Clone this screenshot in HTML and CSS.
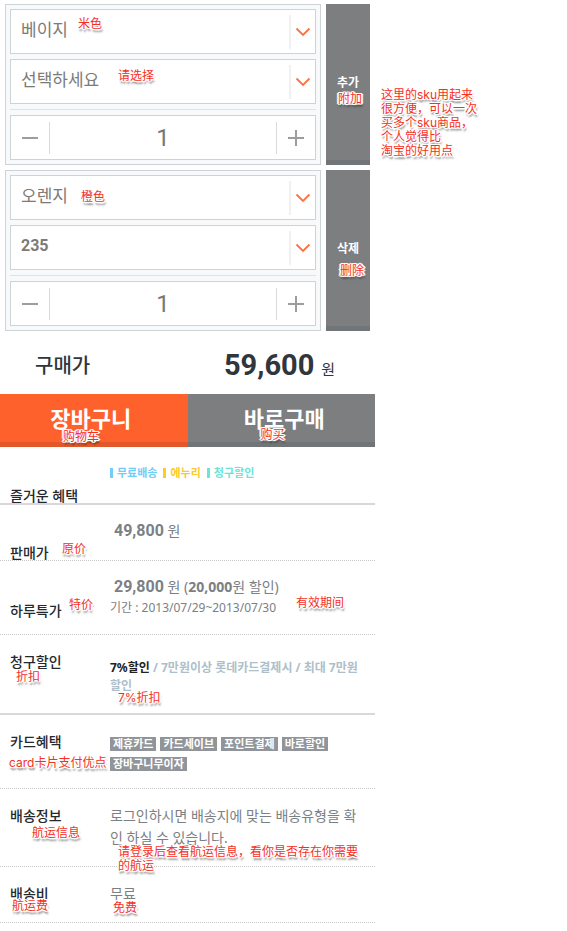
FILE: index.html
```html
<!DOCTYPE html>
<html lang="ko">
<head>
<meta charset="utf-8">
<meta name="viewport" content="width=device-width, initial-scale=1">
<title>구매 옵션</title>
<link rel="stylesheet" href="styles.css">
</head>
<body>
<div class="page">
  <main class="shop">
    <form class="skus">
      <section class="sku">
        <div class="sku-box">
          <div class="pick">
            <select class="pick-input" aria-label="색상"><option>베이지</option></select>
            <svg class="chevron" viewBox="0 0 16 10" aria-hidden="true"><path d="M1.500 1.500 8 8l6.500-6.500"/></svg>
            <span class="note note-beige" lang="zh">米色</span>
          </div>
          <div class="pick">
            <select class="pick-input" aria-label="사이즈"><option>선택하세요</option></select>
            <svg class="chevron" viewBox="0 0 16 10" aria-hidden="true"><path d="M1.500 1.500 8 8l6.500-6.500"/></svg>
            <span class="note note-choose" lang="zh">请选择</span>
          </div>
          <hr class="rule">
          <div class="qty">
            <button class="step" type="button" aria-label="수량 감소"><svg viewBox="0 0 18 18" aria-hidden="true"><path d="M1 9h16"/></svg></button>
            <input class="count" type="text" value="1" aria-label="수량">
            <button class="step" type="button" aria-label="수량 증가"><svg viewBox="0 0 18 18" aria-hidden="true"><path d="M1 9h16M9 1v16"/></svg></button>
          </div>
        </div>
        <button class="side" type="button">추가<span class="note note-add" lang="zh">附加</span></button>
      </section>
      <section class="sku">
        <div class="sku-box">
          <div class="pick">
            <select class="pick-input" aria-label="색상"><option>오렌지</option></select>
            <svg class="chevron" viewBox="0 0 16 10" aria-hidden="true"><path d="M1.500 1.500 8 8l6.500-6.500"/></svg>
            <span class="note note-orange" lang="zh">橙色</span>
          </div>
          <div class="pick">
            <select class="pick-input pick-size" aria-label="사이즈"><option>235</option></select>
            <svg class="chevron" viewBox="0 0 16 10" aria-hidden="true"><path d="M1.500 1.500 8 8l6.500-6.500"/></svg>
          </div>
          <hr class="rule">
          <div class="qty">
            <button class="step" type="button" aria-label="수량 감소"><svg viewBox="0 0 18 18" aria-hidden="true"><path d="M1 9h16"/></svg></button>
            <input class="count" type="text" value="1" aria-label="수량">
            <button class="step" type="button" aria-label="수량 증가"><svg viewBox="0 0 18 18" aria-hidden="true"><path d="M1 9h16M9 1v16"/></svg></button>
          </div>
        </div>
        <button class="side" type="button">삭제<span class="note note-delete" lang="zh">删除</span></button>
      </section>
    </form>

    <div class="total">
      <span class="total-label">구매가</span>
      <span class="total-sum"><strong class="total-num">59,600</strong> 원</span>
    </div>

    <div class="actions">
      <button class="action action-cart" type="button">장바구니<span class="note note-cart" lang="zh">购物车</span></button>
      <button class="action action-buy" type="button">바로구매<span class="note note-buy" lang="zh">购买</span></button>
    </div>

    <dl class="info">
      <div class="row row-benefit solid">
        <dt>즐거운 혜택</dt>
        <dd class="perks">
          <span class="perk perk-ship">무료배송</span>
          <span class="perk perk-sale">에누리</span>
          <span class="perk perk-card">청구할인</span>
        </dd>
      </div>
      <div class="row row-price">
        <dt>판매가</dt>
        <dd class="money"><strong>49,800</strong> 원</dd>
        <dd class="note note-price" lang="zh">原价</dd>
      </div>
      <div class="row row-deal">
        <dt>하루특가</dt>
        <dd>
          <div class="money"><strong>29,800</strong> 원 (<b>20,000</b>원 할인)</div>
          <div class="period">기간 : 2013/07/29~2013/07/30</div>
        </dd>
        <dd class="note note-deal" lang="zh">特价</dd>
        <dd class="note note-period" lang="zh">有效期间</dd>
      </div>
      <div class="row row-discount solid">
        <dt>청구할인</dt>
        <dd class="terms"><em>7%할인</em> / 7만원이상 롯데카드결제시 / 최대 7만원할인</dd>
        <dd class="note note-discount" lang="zh">折扣</dd>
        <dd class="note note-seven" lang="zh">7%折扣</dd>
      </div>
      <div class="row row-cards">
        <dt>카드혜택</dt>
        <dd class="tags">
          <span class="tag">제휴카드</span>
          <span class="tag">카드세이브</span>
          <span class="tag">포인트결제</span>
          <span class="tag">바로할인</span>
          <span class="tag">장바구니무이자</span>
        </dd>
        <dd class="note note-cards" lang="zh">card卡片支付优点</dd>
      </div>
      <div class="row row-delivery">
        <dt>배송정보</dt>
        <dd class="plain">로그인하시면 배송지에 맞는 배송유형을 확인 하실 수 있습니다.</dd>
        <dd class="note note-delivery" lang="zh">航运信息</dd>
        <dd class="note note-login" lang="zh">请登录后查看航运信息，看你是否存在你需要<br>的航运</dd>
      </div>
      <div class="row row-fee">
        <dt>배송비</dt>
        <dd class="plain">무료</dd>
        <dd class="note note-fee" lang="zh">航运费</dd>
        <dd class="note note-free" lang="zh">免费</dd>
      </div>
    </dl>
  </main>
  <aside class="remark" lang="zh">这里的sku用起来<br>很方便，可以一次<br>买多个sku商品，<br>个人觉得比<br>淘宝的好用点</aside>
</div>
</body>
</html>
```
FILE: styles.css
```css
* { box-sizing: border-box; }

body {
  margin: 0;
  background: #fff;
  color: #7b8085;
  font-family: "Noto Sans", "Noto Sans CJK KR", sans-serif;
}

button, input, select { font-family: inherit; }

.page {
  display: grid;
  grid-template-columns: minmax(0, 1fr) 192px;
}

/* Option pickers */
.skus {
  display: flex;
  flex-direction: column;
  gap: 5px;
  padding: 4px 5px 0;
}

.sku { display: flex; gap: 5px; }

.sku-box {
  flex: 1;
  min-width: 0;
  display: flex;
  flex-direction: column;
  gap: 5px;
  padding: 4px;
  border: 1px solid #cdd4d7;
  background: #f7f9fb;
}

.pick {
  position: relative;
  display: flex;
  align-items: center;
}

.pick-input {
  appearance: none;
  width: 100%;
  height: 45px;
  padding: 0 36px 4px 10px;
  border: 1px solid #cdd4d7;
  border-radius: 0;
  background: linear-gradient(#f1f1f1, #f1f1f1) right 24px center / 2px 34px no-repeat #fff;
  color: #7d7b77;
  font-size: 17px;
}

.pick-size {
  font-family: Roboto, sans-serif;
  font-size: 16px;
  font-weight: 700;
}

.chevron {
  position: absolute;
  right: 5px;
  width: 16px;
  height: 10px;
  fill: none;
  stroke: #ff7043;
  stroke-width: 1.8;
  pointer-events: none;
}

.rule {
  width: 100%;
  height: 1px;
  margin: 0;
  border: 0;
  background: #dfe3e6;
}

.qty {
  display: flex;
  align-items: center;
  height: 45px;
  border: 1px solid #cdd4d7;
  background: #fff;
}

.step {
  display: flex;
  align-items: center;
  justify-content: center;
  width: 39px;
  height: 32px;
  padding: 0;
  border: 0 solid #d8dadb;
  background: none;
}

.step:first-child { border-right-width: 1px; }
.step:last-child { border-left-width: 1px; }

.step svg {
  width: 18px;
  height: 18px;
  fill: none;
  stroke: #9c9d9e;
  stroke-width: 2;
}

.count {
  flex: 1;
  min-width: 0;
  height: 32px;
  padding: 0;
  border: 0;
  background: none;
  color: #777;
  font-family: Roboto, sans-serif;
  font-size: 24px;
  text-align: center;
}

.side, .action {
  position: relative;
  padding: 0;
  border: 0;
  border-bottom: 5px solid #717578;
  background: #7d7e80;
  color: #fff;
  font-weight: 700;
}

.side { width: 44px; font-size: 12px; }

/* Total */
.total {
  display: flex;
  align-items: center;
  justify-content: space-between;
  height: 63px;
  padding: 4px 40px 0 35px;
  color: #30363c;
}

.total-label { font-size: 20px; font-weight: 500; }
.total-sum { font-size: 15px; }

.total-num {
  margin-right: 3px;
  font-family: Roboto, sans-serif;
  font-size: 29px;
  line-height: 40px;
}

.actions { display: grid; grid-template-columns: 1fr 1fr; }
.action { height: 53px; font-size: 22px; line-height: 48px; }
.action-cart { padding-right: 6px; border-color: #e2582b; background: #ff612d; }
.action-buy { padding-left: 6px; }

/* Product information */
.info { margin: 0; }

.row {
  position: relative;
  display: grid;
  grid-template-columns: 100px minmax(0, 1fr);
  align-items: start;
  padding: 16px 10px 0;
  border-bottom: 1px dotted #c8c8c8;
}

.solid { border-bottom: 2px solid #d8d8d8; }

dt {
  padding-top: 4px;
  color: #24292e;
  font-size: 14px;
  font-weight: 500;
  line-height: 14px;
}

dd { margin: 0; }

.row-benefit { min-height: 58px; }
.row-benefit dt { padding-top: 26px; }
.row-price { min-height: 56px; }
.row-price dt { padding-top: 25px; }
.row-deal { min-height: 74px; }
.row-deal dt { padding-top: 27px; }
.row-discount { min-height: 80px; }
.row-cards { min-height: 74px; }
.row-delivery { min-height: 78px; }
.row-fee { min-height: 56px; }

.perks {
  display: flex;
  gap: 6px;
  font-size: 11px;
  font-weight: 700;
  line-height: 20px;
}

.perk { display: flex; align-items: center; gap: 4px; }
.perk::before { content: ""; width: 3px; height: 10px; background: currentColor; }
.perk-ship { color: #73cdf7; }
.perk-sale { color: #ffc928; }
.perk-card { color: #6be5d5; }

.money { padding-left: 4px; font-size: 14px; line-height: 20px; }
.money strong { font-family: Roboto, sans-serif; font-size: 16px; }
.period { font-size: 12px; line-height: 22px; }

.terms {
  padding-top: 8px;
  color: #adbfca;
  font-size: 12px;
  font-weight: 700;
  line-height: 18px;
}

.terms em { color: #222; font-style: normal; }

.tags { display: flex; flex-wrap: wrap; gap: 6px 4px; padding-top: 6px; }

.tag {
  padding: 0 3px;
  background: #919599;
  color: #fff;
  font-size: 11px;
  font-weight: 700;
  line-height: 14px;
}

.plain { font-size: 14px; line-height: 22px; }

/* Translator's notes laid over the page */
.note, .remark {
  color: #f5301f;
  font-family: Inter, "Noto Sans CJK SC", sans-serif;
  font-size: 12px;
  font-weight: 400;
  line-height: 14px;
  text-align: left;
  text-shadow: 1px 0 #fff, -1px 0 #fff, 0 1px #fff, 0 -1px #fff, 1px 1px #fff,
    -1px -1px #fff, 1px -1px #fff, -1px 1px #fff, 2px 0 #fff, -2px 0 #fff,
    1px 3px 2px rgba(0, 0, 0, 0.6);
}

.note { position: absolute; white-space: nowrap; pointer-events: none; }
.remark { padding: 88px 0 0 6px; }

.note-beige { left: 68px; top: 8px; }
.note-choose { left: 108px; top: 10px; }
.note-orange { left: 71px; top: 15px; }
.note-add { left: 12px; top: 88px; }
.note-delete { left: 14px; top: 94px; }
.note-cart { left: 63px; top: 36px; }
.note-buy { left: 73px; top: 34px; }
.note-price { left: 62px; top: 37px; }
.note-deal { left: 69px; top: 37px; }
.note-period { left: 296px; top: 35px; }
.note-discount { left: 16px; top: 35px; }
.note-seven { left: 118px; top: 56px; }
.note-cards { left: 9px; top: 41px; }
.note-delivery { left: 32px; top: 37px; }
.note-login { left: 118px; top: 56px; z-index: 1; }
.note-fee { left: 12px; top: 32px; }
.note-free { left: 113px; top: 34px; }
```
